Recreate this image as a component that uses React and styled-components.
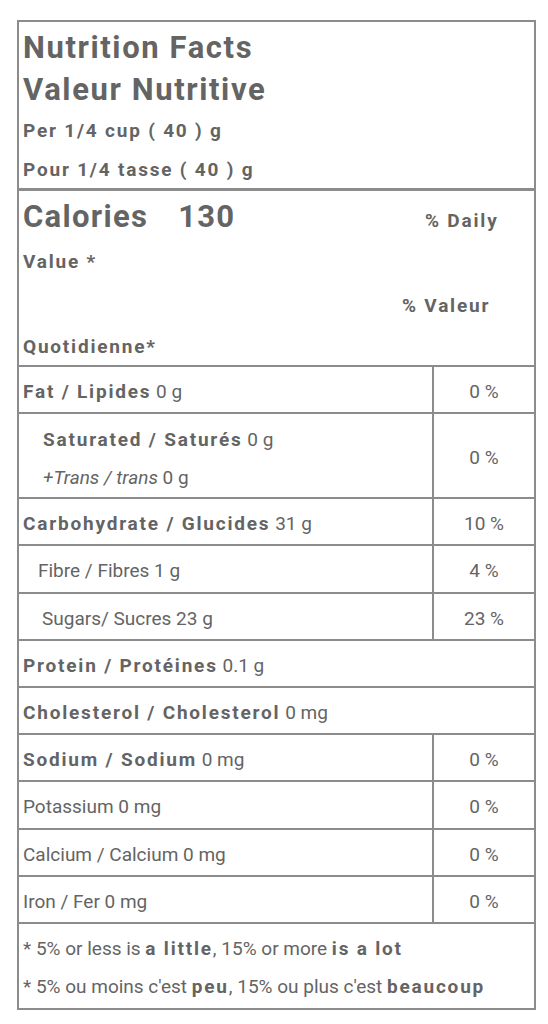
import React from 'react'
import styled, { createGlobalStyle } from 'styled-components'

const GlobalStyle = createGlobalStyle`
    body{
        margin:0;
        background-color:#FFFFFF;
        font-family:Roboto, "Noto Sans", sans-serif;
        color:#646464;
    }
`;

const Label = styled.div`
    box-sizing:border-box;
    width:519px;
    margin:20px 0 0 17px;
    border:2px solid #8c8c8c;
`;

const Header = styled.div`
    padding:4.5px 4px 0px 4px;
    border-bottom:3px solid #8c8c8c;
`;

const Title = styled.div`
    font-size:31px;
    font-weight:700;
    line-height:42px;
    letter-spacing:1.6px;
`;

const Serving = styled.div`
    font-size:19px;
    font-weight:700;
    line-height:${props => props.$lh}px;
    letter-spacing:1.8px;
`;

const CaloriesBlock = styled.div`
    padding:3px 4px 0px 4px;
    border-bottom:2px solid #8c8c8c;
`;

const CalRow = styled.div`
    display:grid;
    grid-template-columns:402px 1fr;
    align-items:baseline;
    height:46px;
    font-size:31px;
    line-height:46px;
    .big{
        font-weight:700;
        letter-spacing:1.3px;
    }
    .amount{
        margin-left:30px;
    }
`;

const HeadLine = styled.div`
    font-size:19px;
    font-weight:700;
    letter-spacing:1.8px;
    line-height:${props => props.$lh}px;
    padding-left:${props => props.$indent || 0}px;
`;

const Row = styled.div`
    display:grid;
    grid-template-columns:${props => props.$full ? '1fr' : '1fr 102px'};
    border-bottom:2px solid #8c8c8c;
    font-size:19px;
    min-height:${props => props.$h || 45}px;
`;

const Name = styled.div`
    box-sizing:border-box;
    padding:${props => props.$tall ? '7px' : '5px'} 4px 0px ${props => props.$indent || 4}px;
    line-height:${props => props.$tall ? 38 : 40}px;
    b{
        font-weight:700;
        letter-spacing:1.8px;
    }
    i{
        font-style:italic;
    }
`;

const Line = styled.div`
    padding-left:${props => props.$indent || 0}px;
`;

const Percent = styled.div`
    display:flex;
    align-items:center;
    justify-content:center;
    padding-top:5px;
    border-left:2px solid #8c8c8c;
    line-height:40px;
`;

const Footer = styled.div`
    padding:6px 4px 2px 4px;
    font-size:19px;
    line-height:38px;
    b{
        font-weight:700;
        letter-spacing:1.8px;
    }
`;

const nutrients = [
    { bold: 'Fat / Lipides', value: '0 g', pct: '0 %' },
    { sub: true },
    { bold: 'Carbohydrate / Glucides', value: '31 g', pct: '10 %' },
    { plain: 'Fibre / Fibres 1 g', indent: 19, pct: '4 %', h: 46 },
    { plain: 'Sugars/ Sucres 23 g', indent: 23, pct: '23 %' },
    { bold: 'Protein / Protéines', value: '0.1 g' },
    { bold: 'Cholesterol / Cholesterol', value: '0 mg' },
    { bold: 'Sodium / Sodium', value: '0 mg', pct: '0 %' },
    { plain: 'Potassium 0 mg', pct: '0 %', h: 46 },
    { plain: 'Calcium / Calcium 0 mg', pct: '0 %' },
    { plain: 'Iron / Fer 0 mg', pct: '0 %' },
];

const NutrientRow = ({ item }) => {
    if (item.sub) {
        return (
            <Row>
                <Name $tall>
                    <Line $indent={20}><b>Saturated / Saturés</b> 0 g</Line>
                    <Line $indent={20}><i>+Trans / trans</i> 0 g</Line>
                </Name>
                <Percent>0 %</Percent>
            </Row>
        );
    }
    const full = !item.pct;
    return (
        <Row $full={full} $h={item.h}>
            <Name $indent={item.indent}>
                {item.bold ? <><b>{item.bold}</b> {item.value}</> : item.plain}
            </Name>
            {!full && <Percent>{item.pct}</Percent>}
        </Row>
    );
};

export default function App() {
    return (
        <React.Fragment>
            <GlobalStyle />
            <Label>
                <Header>
                    <Title>Nutrition Facts</Title>
                    <Title>Valeur Nutritive</Title>
                    <Serving $lh={40}>Per 1/4 cup ( 40 ) g</Serving>
                    <Serving $lh={37}>Pour 1/4 tasse ( 40 ) g</Serving>
                </Header>
                <CaloriesBlock>
                    <CalRow>
                        <div>
                            <span className="big">Calories</span>
                            <span className="big amount">130</span>
                        </div>
                        <HeadLine $lh={30}>% Daily</HeadLine>
                    </CalRow>
                    <HeadLine $lh={44}>Value *</HeadLine>
                    <HeadLine $lh={44} $indent={379}>% Valeur</HeadLine>
                    <HeadLine $lh={37}>Quotidienne*</HeadLine>
                </CaloriesBlock>
                {nutrients.map((item, i) => <NutrientRow key={i} item={item} />)}
                <Footer>
                    <div>* 5% or less is <b>a little</b>, 15% or more <b>is a lot</b></div>
                    <div>* 5% ou moins c'est <b>peu</b>, 15% ou plus c'est <b>beaucoup</b></div>
                </Footer>
            </Label>
        </React.Fragment>
    );
}
